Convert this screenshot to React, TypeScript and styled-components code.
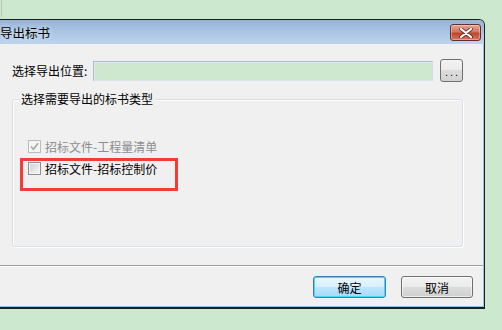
import styled, { createGlobalStyle } from 'styled-components';

const GlobalStyle = createGlobalStyle`
  html, body {
    margin: 0;
    padding: 0;
  }
  body {
    font-family: "Noto Sans CJK SC", "Liberation Sans", sans-serif;
    font-size: 12px;
    color: #000;
  }
  * { box-sizing: border-box; }
`;

const CheckMark = ({ color }: { color: string }) => (
  <svg width="9" height="9" viewBox="0 0 9 9">
    <path d="M1 4.5 L3.5 7.2 L8 1.2" fill="none" stroke={color} strokeWidth="1.6" />
  </svg>
);

const App = () => {
  return (
    <S.Page>
      <GlobalStyle />
      <S.Edge />
      <S.Window>
        <S.TitleBar>
          <span>导出标书</span>
          <S.CloseButton>
            <svg width="14" height="10" viewBox="0 0 14 10">
              <path
                d="M2 1 L12 9 M12 1 L2 9"
                stroke="#5a2b2b"
                strokeWidth="3.6"
                strokeLinecap="round"
              />
              <path
                d="M2 1 L12 9 M12 1 L2 9"
                stroke="#ffffff"
                strokeWidth="2.2"
                strokeLinecap="round"
              />
            </svg>
          </S.CloseButton>
        </S.TitleBar>
        <S.Client>
          <S.PathRow>
            <S.Label>选择导出位置:</S.Label>
            <S.PathInput />
            <S.BrowseButton>...</S.BrowseButton>
          </S.PathRow>
          <S.Group>
            <S.Legend>选择需要导出的标书类型</S.Legend>
            <S.Options>
              <S.Option $disabled>
                <S.Box $disabled>
                  <CheckMark color="#a6a6a6" />
                </S.Box>
                招标文件-工程量清单
              </S.Option>
              <S.Option>
                <S.Box />
                招标文件-招标控制价
              </S.Option>
            </S.Options>
            <S.Highlight />
          </S.Group>
          <S.Footer>
            <S.DialogButton $primary>确定</S.DialogButton>
            <S.DialogButton>取消</S.DialogButton>
          </S.Footer>
        </S.Client>
      </S.Window>
    </S.Page>
  );
};

interface StyleProps {
  $disabled?: boolean;
  $primary?: boolean;
}

const S = {
  Page: styled.div`
    position: relative;
    width: 502px;
    height: 330px;
    padding-top: 19px;
    background-color: #cce8cf;
    overflow: hidden;
  `,
  Edge: styled.div`
    position: absolute;
    left: 1px;
    top: 0;
    width: 1px;
    height: 17px;
    background-color: #b9c7bb;
  `,
  Window: styled.div`
    width: 485px;
    height: 290px;
    display: flex;
    flex-direction: column;
    border: 1px solid #1e1e1e;
    border-left: none;
    border-bottom-width: 2px;
    border-top-right-radius: 6px;
    overflow: hidden;
    background-color: #c3d8ee;
  `,
  TitleBar: styled.div`
    position: relative;
    height: 24px;
    flex-shrink: 0;
    display: flex;
    align-items: center;
    padding-left: 0;
    background: linear-gradient(to bottom, #97b3d6 0%, #aac4e3 50%, #bcd4ee 100%);
    font-size: 12.5px;
    color: #000;
    text-shadow: 0 0 6px rgba(255, 255, 255, 0.8);
  `,
  CloseButton: styled.div`
    position: absolute;
    right: 3px;
    top: 4px;
    width: 31px;
    height: 17px;
    display: flex;
    align-items: center;
    justify-content: center;
    border: 1px solid #6a2b2b;
    border-radius: 3px;
    background: linear-gradient(to bottom, #e8a493 0%, #d4755f 45%, #c2452c 55%, #d2775e 100%);
    box-shadow: inset 0 0 0 1px rgba(255, 255, 255, 0.35);
  `,
  Client: styled.div`
    flex: 1;
    display: flex;
    flex-direction: column;
    background-color: #f0f0f0;
    border-right: 1px solid #8fc0e8;
    border-bottom: 1px solid #8fc0e8;
  `,
  PathRow: styled.div`
    display: flex;
    align-items: center;
    height: 23px;
    margin-top: 15px;
    padding-left: 12px;
  `,
  Label: styled.div`
    width: 81px;
    font-size: 12px;
    white-space: nowrap;
  `,
  PathInput: styled.div`
    width: 340px;
    height: 20px;
    background-color: #cde8cf;
    border: 1px solid #abbcd0;
    border-bottom-color: #dbe4ee;
    border-right-color: #d2dde9;
    box-shadow: inset 1px 1px 0 #e2ebf4;
  `,
  BrowseButton: styled.div`
    width: 23px;
    height: 23px;
    margin-left: 7px;
    display: flex;
    align-items: flex-end;
    justify-content: center;
    padding-bottom: 5px;
    border: 1px solid #707070;
    border-radius: 3px;
    background: linear-gradient(to bottom, #f3f3f3 0%, #ebebeb 48%, #dddddd 50%, #d2d2d2 100%);
    font-family: "Liberation Sans", sans-serif;
    font-size: 11px;
    line-height: 8px;
    letter-spacing: 2px;
    text-indent: 2px;
  `,
  Group: styled.div`
    position: relative;
    margin: 17px 0 0 12px;
    width: 451px;
    height: 148px;
    border: 1px solid #d5dfe5;
    border-radius: 3px;
    box-shadow: inset 1px 1px 0 #ffffff, 1px 1px 0 #ffffff;
  `,
  Legend: styled.div`
    position: absolute;
    left: 6px;
    top: -9px;
    padding: 0 2px;
    background-color: #f0f0f0;
    font-size: 12px;
    line-height: 16px;
  `,
  Options: styled.div`
    display: flex;
    flex-direction: column;
    gap: 6px;
    padding: 38px 0 0 15px;
  `,
  Option: styled.div<StyleProps>`
    display: flex;
    align-items: center;
    gap: 4px;
    height: 16px;
    font-size: 12px;
    color: ${({ $disabled }) => ($disabled ? '#8d8d8d' : '#000')};
  `,
  Box: styled.div<StyleProps>`
    width: 13px;
    height: 13px;
    display: flex;
    align-items: center;
    justify-content: center;
    border: 1px solid ${({ $disabled }) => ($disabled ? '#bcbcbc' : '#8e8f8f')};
    background: ${({ $disabled }) =>
      $disabled
        ? '#f4f4f4'
        : 'linear-gradient(135deg, #cbcfd5 0%, #e6e8ea 60%, #f6f6f6 100%)'};
    box-shadow: inset 0 0 0 1px #f4f4f4;
  `,
  Highlight: styled.div`
    position: absolute;
    left: 7px;
    top: 58px;
    width: 158px;
    height: 33px;
    border: 3px solid #f53a3a;
  `,
  Footer: styled.div`
    margin-top: 18px;
    flex: 1;
    display: flex;
    justify-content: flex-end;
    align-items: flex-start;
    gap: 15px;
    padding: 10px 10px 0 0;
    border-top: 1px solid #a0a0a0;
    box-shadow: inset 0 1px 0 #ffffff;
  `,
  DialogButton: styled.div<StyleProps>`
    width: ${({ $primary }) => ($primary ? '73px' : '72px')};
    height: 22px;
    display: flex;
    align-items: center;
    justify-content: center;
    font-size: 12px;
    border-radius: 3px;
    border: 1px solid ${({ $primary }) => ($primary ? '#3c7fb1' : '#707070')};
    background: ${({ $primary }) =>
      $primary
        ? 'linear-gradient(to bottom, #eaf6fd 0%, #d9f0fc 48%, #bee6fd 50%, #a7d9f5 100%)'
        : 'linear-gradient(to bottom, #f2f2f2 0%, #ebebeb 48%, #dddddd 50%, #cfcfcf 100%)'};
    box-shadow: ${({ $primary }) =>
      $primary
        ? 'inset 0 0 0 1px #48d7fb'
        : 'inset 0 0 0 1px rgba(255, 255, 255, 0.6)'};
  `,
};

export default App;
